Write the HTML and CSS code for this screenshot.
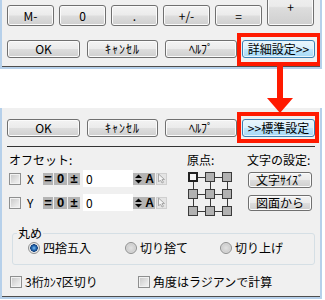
FILE: index.html
```html
<!DOCTYPE html>
<html lang="ja">
<head>
    <meta charset="UTF-8">
    <meta name="viewport" content="width=device-width, initial-scale=1.0">
    <title>詳細設定</title>
    <link rel="stylesheet" href="styles.css">
</head>
<body>
    <!-- before: calculator with the details button -->
    <div class="shot shot-top">
        <div class="client">
            <div class="calc-row">
                <button class="btn calc">M-</button>
                <button class="btn calc">0</button>
                <button class="btn calc">.</button>
                <button class="btn calc">+/-</button>
                <button class="btn calc">=</button>
                <button class="btn calc tall">+</button>
            </div>
            <div class="cmd-row">
                <button class="btn cmd ok">OK</button>
                <button class="btn cmd cancel"><span class="hw">ｷｬﾝｾﾙ</span></button>
                <button class="btn cmd help">ﾍﾙﾌﾟ</button>
                <span class="mark mark-top"><button class="btn cmd toggle default">詳細設定&gt;&gt;</button></span>
            </div>
        </div>
    </div>

    <svg class="arrow" width="28" height="50" viewBox="0 0 28 50">
        <rect x="10" y="0" width="6" height="35" fill="#ff1a00"/>
        <polygon points="0,34 26,34 13,49" fill="#ff1a00"/>
    </svg>

    <!-- after: the expanded settings -->
    <div class="shot shot-bottom">
        <div class="client">
            <div class="cmd-row">
                <button class="btn cmd ok">OK</button>
                <button class="btn cmd cancel"><span class="hw">ｷｬﾝｾﾙ</span></button>
                <button class="btn cmd help">ﾍﾙﾌﾟ</button>
                <span class="mark mark-bottom"><button class="btn cmd toggle default">&gt;&gt;標準設定</button></span>
            </div>
            <div class="sep"></div>

            <div class="mid">
                <div class="offset">
                    <div class="caption">オフセット:</div>
                    <div class="field-row">
                        <span class="cb"></span>
                        <span class="axis">X</span>
                        <span class="tool t-eq">=</span>
                        <span class="tool t-zero">0</span>
                        <span class="tool t-pm">±</span>
                        <input class="num" type="text" value="0">
                        <span class="tool t-spin">
                            <svg width="9" height="10" viewBox="0 0 9 10"><polygon points="1,4 8,4 4.5,0.5" fill="#000"/><polygon points="1,6 8,6 4.5,9.5" fill="#000"/></svg>
                        </span>
                        <span class="tool t-a">A</span>
                        <span class="tool t-pick">
                            <svg width="9" height="11" viewBox="0 0 9 11"><path d="M1.5 1 L1.5 9 L3.5 7 L5 10 L6.5 9.3 L5 6.5 L7.5 6.5 Z" fill="#f4f4f4" stroke="#a8a8a8" stroke-width="1"/></svg>
                        </span>
                    </div>
                    <div class="field-row">
                        <span class="cb"></span>
                        <span class="axis">Y</span>
                        <span class="tool t-eq">=</span>
                        <span class="tool t-zero">0</span>
                        <span class="tool t-pm">±</span>
                        <input class="num" type="text" value="0">
                        <span class="tool t-spin">
                            <svg width="9" height="10" viewBox="0 0 9 10"><polygon points="1,4 8,4 4.5,0.5" fill="#000"/><polygon points="1,6 8,6 4.5,9.5" fill="#000"/></svg>
                        </span>
                        <span class="tool t-a">A</span>
                        <span class="tool t-pick">
                            <svg width="9" height="11" viewBox="0 0 9 11"><path d="M1.5 1 L1.5 9 L3.5 7 L5 10 L6.5 9.3 L5 6.5 L7.5 6.5 Z" fill="#f4f4f4" stroke="#a8a8a8" stroke-width="1"/></svg>
                        </span>
                    </div>
                </div>

                <div class="origin">
                    <div class="caption">原点:</div>
                    <svg class="origin-grid" width="44" height="44" viewBox="0 0 44 44">
                        <g stroke="#3a3a3a" stroke-width="1">
                            <line x1="5" y1="5.5" x2="39" y2="5.5"/>
                            <line x1="5" y1="22.5" x2="39" y2="22.5"/>
                            <line x1="5" y1="39.5" x2="39" y2="39.5"/>
                            <line x1="5.5" y1="5" x2="5.5" y2="39"/>
                            <line x1="22.5" y1="5" x2="22.5" y2="39"/>
                            <line x1="39.5" y1="5" x2="39.5" y2="39"/>
                        </g>
                        <g fill="#b2b2b2" stroke="#3a3a3a" stroke-width="1">
                            <rect x="17.5" y="0.5" width="9" height="9"/>
                            <rect x="34.5" y="0.5" width="9" height="9"/>
                            <rect x="0.5" y="17.5" width="9" height="9"/>
                            <rect x="17.5" y="17.5" width="9" height="9"/>
                            <rect x="34.5" y="17.5" width="9" height="9"/>
                            <rect x="0.5" y="34.5" width="9" height="9"/>
                            <rect x="17.5" y="34.5" width="9" height="9"/>
                            <rect x="34.5" y="34.5" width="9" height="9"/>
                        </g>
                        <rect x="1" y="1" width="8" height="8" fill="#f4f4f4" stroke="#222" stroke-width="2"/>
                    </svg>
                </div>

                <div class="textset">
                    <div class="caption">文字の設定:</div>
                    <button class="btn small">文字ｻｲｽﾞ</button>
                    <button class="btn small">図面から</button>
                </div>
            </div>

            <fieldset class="rounding">
                <legend>丸め</legend>
                <div class="radios">
                    <label class="radio-item r1"><span class="rd checked"></span>四捨五入</label>
                    <label class="radio-item r2"><span class="rd"></span>切り捨て</label>
                    <label class="radio-item r3"><span class="rd"></span>切り上げ</label>
                </div>
            </fieldset>

            <div class="options">
                <label class="opt o1"><span class="cb"></span>3桁ｶﾝﾏ区切り</label>
                <label class="opt"><span class="cb"></span>角度はラジアンで計算</label>
            </div>
        </div>
    </div>
</body>
</html>
```

FILE: styles.css
```css
* {
  margin: 0;
  padding: 0;
  box-sizing: border-box;
}

body {
  font-family: "Noto Sans CJK JP", sans-serif;
  font-size: 12px;
  color: #000;
  background-color: #fff;
  width: 325px;
  height: 300px;
  overflow: hidden;
  position: relative;
}

/* window pieces */
.shot {
  width: 322px;
  border: 2px solid #b6d0ea;
  border-top: none;
}

.shot .client {
  background-color: #f0f0f0;
  border-bottom: 1px solid #4e4e4e;
  overflow: hidden;
}

.shot-top .client {
  height: 67px;
  padding: 5px 5px 0;
}

.shot-bottom {
  margin-top: 39px;
}

.shot-bottom .client {
  height: 189px;
  padding: 11px 5px 0;
}

/* half-width kana sit a little wider in the original font */
.hw {
  letter-spacing: 1px;
}

/* buttons */
.btn {
  display: flex;
  align-items: center;
  justify-content: center;
  font-family: "Noto Sans CJK JP", sans-serif;
  font-size: 12px;
  line-height: 1;
  color: #000;
  border: 1px solid #707070;
  border-radius: 3px;
  background: linear-gradient(#f3f3f3 0%, #ebebeb 48%, #dddddd 52%, #cfcfcf 100%);
  box-shadow: inset 0 0 0 1px #fbfbfb;
  cursor: pointer;
}

.btn.default {
  border-color: #3c7fb1;
  background: linear-gradient(#eaf6fd 0%, #d9f0fc 48%, #bee6fd 52%, #a7d9f5 100%);
  box-shadow: inset 0 0 0 1px #e8f5fc;
}

.calc-row {
  display: flex;
  align-items: flex-end;
  gap: 5px;
  height: 21px;
}

.btn.calc {
  width: 47px;
  height: 21px;
  flex-shrink: 0;
}

.btn.tall {
  height: 38px;
}

.cmd-row {
  display: flex;
  align-items: center;
}

.shot-top .cmd-row {
  margin-top: 14px;
}

.btn.cmd {
  height: 18px;
}

.btn.ok {
  width: 73px;
}

.btn.cancel {
  width: 71px;
  margin-left: 7px;
}

.btn.help {
  width: 72px;
  margin-left: 7px;
}

.btn.toggle {
  width: 73px;
}

.mark {
  position: relative;
  margin-left: 5px;
}

.mark::after {
  content: "";
  position: absolute;
  border: 4px solid #ff1a00;
  pointer-events: none;
}

.mark-top::after {
  left: -5px;
  right: -6px;
  top: -7px;
  bottom: -8px;
}

.mark-bottom::after {
  left: -5px;
  right: -4px;
  top: -7px;
  bottom: -6px;
}

.arrow {
  position: absolute;
  left: 267px;
  top: 64px;
  z-index: 2;
}

.sep {
  height: 1px;
  background-color: #333;
  margin-top: 9px;
}

/* offset / origin / text block */
.mid {
  display: flex;
  align-items: flex-start;
  padding-left: 2px;
  margin-top: 6px;
}

.caption {
  height: 14px;
  line-height: 14px;
  white-space: nowrap;
}

.offset {
  width: 178px;
}

.field-row {
  display: flex;
  align-items: center;
  height: 17px;
  margin-top: 3px;
}

.field-row + .field-row {
  margin-top: 7px;
}

.cb {
  width: 12px;
  height: 12px;
  flex-shrink: 0;
  border: 1px solid #8e8f8f;
  background: linear-gradient(135deg, #c6c6c6 0%, #e4e4e4 60%, #f4f4f4 100%);
  box-shadow: inset 0 0 0 1px #f2f2f2;
}

.axis {
  width: 16px;
  margin-left: 6px;
  line-height: 14px;
}

.tool {
  display: flex;
  align-items: center;
  justify-content: center;
  height: 12px;
  background-color: #b4b4b4;
  font-family: "Liberation Sans", sans-serif;
  font-weight: bold;
  font-size: 13px;
  line-height: 1;
  flex-shrink: 0;
}

.t-eq {
  width: 10px;
}

.t-zero {
  width: 13px;
  margin-left: 1px;
}

.t-pm {
  width: 12px;
  margin-left: 1px;
}

.num {
  width: 50px;
  height: 17px;
  margin-left: 3px;
  border: none;
  background-color: #fff;
  padding-left: 3px;
  font-family: "Noto Sans CJK JP", sans-serif;
  font-size: 12px;
  line-height: 17px;
  color: #000;
  outline: none;
}

.t-spin {
  width: 11px;
}

.t-a {
  width: 11px;
  font-size: 12px;
}

.t-pick {
  width: 11px;
  margin-left: 1px;
  background-color: #e4e4e4;
  border: 1px solid #cfcfcf;
}

.origin {
  width: 60px;
}

.origin-grid {
  display: block;
  margin: 5px 0 0 1px;
}

.textset {
  display: flex;
  flex-direction: column;
  align-items: flex-start;
}

.btn.small {
  width: 64px;
  height: 16px;
  margin: 5px 0 0 1px;
}

.btn.small + .btn.small {
  margin-top: 7px;
}

/* rounding group */
.rounding {
  margin: 10px 0 0 5px;
  border: 1px solid #d5dfe5;
  border-radius: 3px;
  padding: 1px 0 9px 15px;
}

.rounding legend {
  margin-left: -11px;
  padding: 0 1px;
  line-height: 14px;
}

.radios {
  display: flex;
  align-items: center;
  height: 14px;
}

.radio-item {
  display: flex;
  align-items: center;
  gap: 3px;
  line-height: 14px;
  white-space: nowrap;
}

.r1 {
  width: 97px;
}

.r2 {
  width: 95px;
}

.rd {
  width: 12px;
  height: 12px;
  border-radius: 50%;
  border: 1px solid #8e8f8f;
  background: radial-gradient(circle, #e2e2e2 0%, #d0d0d0 55%, #f4f4f4 100%);
  flex-shrink: 0;
}

.rd.checked {
  background: radial-gradient(circle, #7fc0f0 0px, #2a6fb8 2px, #0e3e7c 3.5px, #e6e6e6 4px, #f4f4f4 100%);
}

/* bottom options */
.options {
  display: flex;
  align-items: center;
  height: 14px;
  margin-top: 10px;
  padding-left: 3px;
}

.opt {
  display: flex;
  align-items: center;
  gap: 3px;
  line-height: 14px;
  white-space: nowrap;
}

.o1 {
  width: 128px;
}
```
